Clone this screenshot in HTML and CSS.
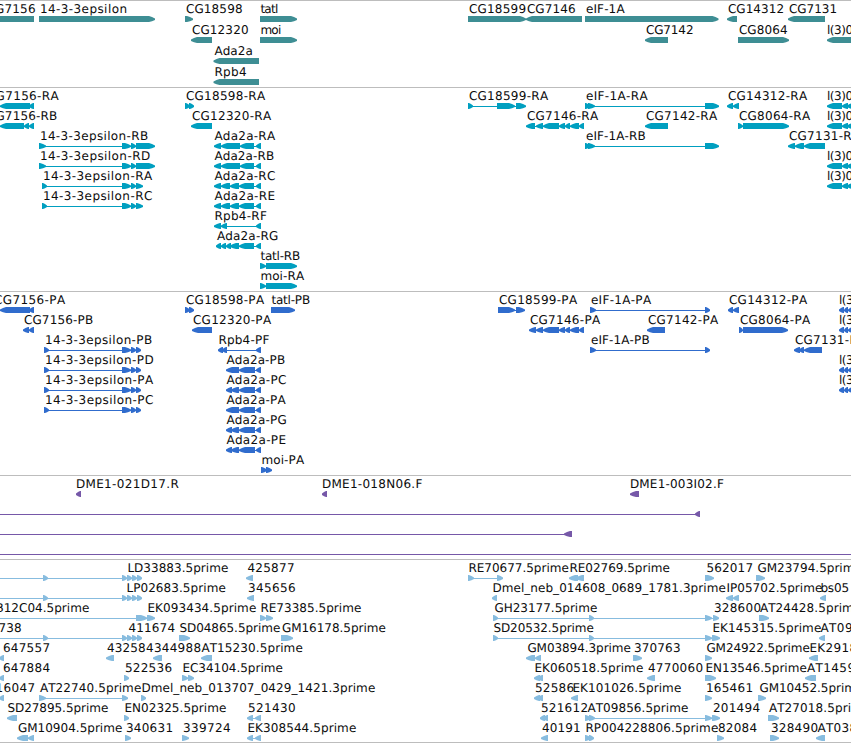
FILE: index.html
```html
<!DOCTYPE html>
<html lang="en">
<head>
<meta charset="utf-8">
<title>Genome browser</title>
<link rel="stylesheet" href="styles.css">
</head>
<body>
<main class="browser" id="browser"></main>
<script src="tracks.js"></script>
</body>
</html>
```
FILE: styles.css
```css
body {
  margin: 0;
  background: #fff;
  overflow: hidden;
}

.browser {
  display: flex;
  flex-direction: column;
  width: 851px;
  border-bottom: 1px solid #bdbdbd;
}

.track {
  box-sizing: border-box;
  border-top: 1px solid #bdbdbd;
  overflow: hidden;
}

.track svg {
  display: block;
}

.track text {
  font: 12px "DejaVu Sans", sans-serif;
  font-kerning: none;
  text-rendering: geometricPrecision;
  fill: #0c0c0c;
}

.genes { height: 87px; color: #3e8e94; }
.transcripts { height: 204px; color: #009fc0; }
.proteins { height: 184px; color: #306ccd; }
.clones { height: 84px; color: #7658a8; }
.ests { height: 183px; color: #87bcdf; }
```
FILE: tracks.js
```javascript
// Each feature: "label | left | right | strand | exon ranges".
// left/right bound the label's ink; exon ranges are x0:x1 pairs.
const L3 = 'l(3)05822|827.5|881|<|827:842 842:848 847:853';
const L3P = 'l(3)05822|839.5|893|<|839:844 844:848 848:853';
const E5 = '122:127 127:132 132:137 137:142';
const tracks = [
  { name: 'genes', height: 86, pitch: 21, rows: [
    ['CG7156|-14|34.5|<|-20:34', '14-3-3epsilon|40.5|126|>|39:155', 'CG18598|185.5|241.5|>|185:193',
     'tatl|260|277.5|>|260:297', 'CG18599|468.5|525|>|468:526', 'CG7146|526.5|574.5|<|526:582',
     'eIF-1A|585.5|625|>|585:718.5', 'CG14312|727.5|783|<|727:737', 'CG7131|788.5|836|<|788:825'],
    ['CG12320|191.5|247.5|<|191:212', 'moi|261|280.5|>|260:297', 'CG7142|645.5|692.5|<|645:668',
     'CG8064|738.5|786.5|>|738:789', 'l(3)05822|827.5|881|<|827:860'],
    ['Ada2a|214|252|<|213.5:259'],
    ['Rpb4|215|245.5|<|213.5:259']
  ] },
  { name: 'transcripts', height: 203, pitch: 20, rows: [
    ['CG7156-RA|-13.5|59|<|0:30 29:34', 'CG18598-RA|185.5|265.5|>|185:190 189:194',
     'CG18599-RA|468.5|548.5|>|468:473 497:515 516:526', 'eIF-1A-RA|585.5|648|>|585:590 588:595 705:719',
     'CG14312-RA|727.5|807.5|<|727:733 733:739', L3],
    ['CG7156-RB|-13.5|56.5|<|0:24 24:29 29:34', 'CG12320-RA|191.5|271.5|<|191:212',
     'CG7146-RA|526.5|598.5|<|526:535 536:543 543:559 559:565 565:570 570:579 579:584',
     'CG7142-RA|645.5|717.5|<|645:668', 'CG8064-RA|738.5|810.5|>|738:743 743:789', L3],
    ['14-3-3epsilon-RB|40.5|147.5|>|39:46 122:131 131:136 136:155', 'Ada2a-RA|214|275.5|<|214:221 221:240 240:254 256:261',
     'eIF-1A-RB|585.5|645|>|585:590 588:595 705:719', 'CG7131-RA|788.5|860.5|<|788:795 795:804 804:825'],
    ['14-3-3epsilon-RD|40.5|149.5|>|39:46 122:131 131:136 136:155', 'Ada2a-RB|214|273.5|<|214:221 221:240 240:254 256:261', L3],
    ['14-3-3epsilon-RA|43.5|152.5|>|42:47 122:131 131:136 136:143', 'Ada2a-RC|214|274.5|<|214:221 221:230 230:239 239:254 256:261', L3],
    ['14-3-3epsilon-RC|43.5|151.5|>|42:47 122:131 131:136 136:143', 'Ada2a-RE|214|274|<|214:221 221:230 230:239 239:254 256:261'],
    ['Rpb4-RF|215|266.5|<|214:221 221:227 256:261'],
    ['Ada2a-RG|216.5|277.5|<|216:221 221:226 226:231 230:239 239:254 256:261'],
    ['tatl-RB|260|299.5|>|260:266 266:297'],
    ['moi-RA|261|304.5|>|260:266 266:297']
  ] },
  { name: 'proteins', height: 183, pitch: 20, rows: [
    ['CG7156-PA|-6.5|65.5|<|0:30 29:34', 'CG18598-PA|185.5|264.5|>|185:190 189:194', 'tatl-PB|271|309.5|>|271:295',
     'CG18599-PA|498.5|577.5|>|498:515 516:525', 'eIF-1A-PA|590.5|651.5|>|590:596 705:710',
     'CG14312-PA|728.5|807.5|<|728:733 733:739', L3P],
    ['CG7156-PB|23.5|92.5|<|23:29 29:34', 'CG12320-PA|192.5|271.5|<|192:212',
     'CG7146-PA|529.5|600.5|<|529:536 536:543 543:559 559:565 565:570 570:579 579:584',
     'CG7142-PA|647.5|718.5|<|647:665', 'CG8064-PA|739.5|810.5|>|739:743 743:788', L3P],
    ['14-3-3epsilon-PB|45.5|151.5|>|44:49 122:131 131:136 136:141', 'Rpb4-PF|219|269|<|218:223 222:227 256:261',
     'eIF-1A-PB|590.5|649|>|590:596 705:710', 'CG7131-PA|794.5|865.5|<|794:800 799:804 804:822'],
    ['14-3-3epsilon-PD|45.5|153|>|44:49 122:131 131:136 136:141', 'Ada2a-PB|226|284.5|<|226:239 239:255 256:261', L3P],
    ['14-3-3epsilon-PA|45.5|153.5|>|44:49 122:131 131:136 136:141', 'Ada2a-PC|226|285.5|<|226:232 231:239 239:255 256:261', L3P],
    ['14-3-3epsilon-PC|45.5|152.5|>|44:49 122:131 131:136 136:141', 'Ada2a-PA|226|286|<|226:239 239:255 256:261'],
    ['Ada2a-PG|226|286|<|226:232 231:239 239:255 256:261'],
    ['Ada2a-PE|226|285|<|226:232 231:239 239:255 256:261'],
    ['moi-PA|262|304.5|>|261:267 266:272']
  ] },
  { name: 'clones', height: 83, pitch: 20, rows: [
    ['DME1-021D17.R|76.5|178|<|76:81', 'DME1-018N06.F|322.5|422|<|322:327', 'DME1-003I02.F|630.5|723.5|<|630:639'],
    ['|||<|-20:-10 695:700'],
    ['|||<|-20:-10 564:572'],
    ['|||<|-20:-10 860:870']
  ] },
  { name: 'ests', height: 182, pitch: 20, rows: [
    ['LD33883.5prime|128|227.5|>|-20:-10 43:48 ' + E5, '425877|247|293.5|<|246:253',
     'RE70677.5prime|469|568|>|468:474 497:503', 'RE02769.5prime|570|669|<|569:578 576:584',
     '562017|706|752|>|705:714', 'GM23794.5prime|757|861|>|756:765'],
    ['LP02683.5prime|127|225|>|-20:-10 43:48 ' + E5, '345656|247.5|294.5|<|247:254',
     'Dmel_neb_014608_0689_1781.3prime|493|725|<|492:497', 'IP05702.5prime|727|821.5|<|726:733 733:739',
     'bs05|821|848|<|820:826'],
    ['B12C04.5prime|-4|88.5|>|-20:-10 136:147 147:155', 'EK093434.5prime|148|255.5|>|',
     'RE73385.5prime|261|360.5|>|260:266 266:273', 'GH23177.5prime|494|596.5|>|493:498 589:594 705:712 713:719',
     '328600|713.5|760|>|', 'AT24428.5prime|759.5|860.5|>|759:769'],
    ['738|-2|20.5|>|-20:-10 43:48 ' + E5, '411674|128|174|>|', 'SD04865.5prime|179|279.5|>|179:190',
     'GM16178.5prime|281.5|385|>|281:293', 'SD20532.5prime|493|593|>|493:498 589:594 705:712 712:720',
     'EK145315.5prime|713|820.5|>|', 'AT09|820|851.5|<|819:825'],
    ['647557|2.5|49|<|-1:4', '432584|106.5|152.5|<|106:114', '344988|153.5|200|<|153:162',
     'AT15230.5prime|201|302|<|201:212', 'GM03894.3prime|527|630|<|526:535 535:541', '370763|633.5|679.5|>|633:642',
     'GM24922.5prime|706|809|>|705:712', 'EK2918|810|856|<|809:818'],
    ['647884|2.5|49|<|-1:4', '522536|124.5|171|>|124:129', 'EC34104.5prime|183|282|>|182:188 188:194',
     'EK060518.5prime|535|642.5|<|534:540 537:543', '4770060|647.5|702|<|647:655',
     'EN13546.5prime|706|806|>|705:716', 'AT1459|806.5|854|<|805:816'],
    ['16047|-4|34|<|-1:4', 'AT22740.5prime|39.5|140.5|>|39:46 122:128',
     'Dmel_neb_013707_0429_1421.3prime|142|374.5|>|141:146', '52586|534.5|573|<|534:540 537:543',
     'EK101026.5prime|573|680.5|<|571:578', '165461|706.5|752|>|705:712', 'GM10452.5prime|759|862.5|>|758:766'],
    ['SD27895.5prime|7|107.5|<|7:17', 'EN02325.5prime|125|225.5|>|124:129', '521430|247.5|294.5|<|247:253 255:261',
     '521612|540.5|587|<|540:545 543:548', 'AT09856.5prime|587|687.5|>|585:591 589:595 705:712 712:720',
     '201494|712.5|759|>|', 'AT27018.5prime|768.5|869.5|>|768:779'],
    ['GM10904.5prime|17.5|121.5|<|17:28 28:34', '340631|125.5|172|>|125:131', '339724|182.5|229.5|>|182:189',
     'EK308544.5prime|248|355.5|<|247:253 255:261', '40191|541.5|579.5|<|541:548',
     'RP004228806.5prime|586|717.5|>|585:591 589:594', '82084|717.5|756|>|717:724',
     '328490|770.5|817|>|770:779', 'AT038|817|856|<|816:825']
  ] }
];

const NS = 'http://www.w3.org/2000/svg';
const pen = document.createElement('canvas').getContext('2d');
pen.font = '12px "DejaVu Sans", sans-serif';
pen.fontKerning = 'none';
pen.textRendering = 'geometricPrecision';

function add(parent, tag, attrs) {
  const node = document.createElementNS(NS, tag);
  for (const key in attrs) node.setAttribute(key, attrs[key]);
  parent.appendChild(node);
  return node;
}

function arrow(x0, x1, y, strand) {
  const head = Math.min(6, x1 - x0 - 1);
  const flip = strand === '<';
  const tip = flip ? x0 : x1;
  const tail = flip ? x1 : x0;
  const d = flip ? 1 : -1;
  const neck = tip + d * head;
  return [[tail, y], [neck, y], [tip + d * head * 0.5, y + 1], [tip, y + 2.5], [tip, y + 3.9],
          [tip + d * head * 0.5, y + 5.2], [neck, y + 6], [tail, y + 6]].map(p => p.join()).join(' ');
}

for (const track of tracks) {
  const section = document.createElement('section');
  section.className = 'track ' + track.name;
  const svg = add(section, 'svg', { width: 851, height: track.height });
  track.rows.forEach((row, i) => {
    const top = i * track.pitch;
    for (const item of row) {
      const [label, left, right, strand, ranges] = item.split('|');
      const exons = ranges ? ranges.split(' ').map(r => r.split(':').map(Number)) : [];
      if (exons.length > 1) {
        const start = exons[0][0] + 2;
        const end = exons[exons.length - 1][1] - 2;
        add(svg, 'rect', { x: start, y: top + 18, width: end - start, height: 1, fill: 'currentColor' });
      }
      for (const [x0, x1] of exons) {
        add(svg, 'polygon', { points: arrow(x0, x1, top + 15, strand), fill: 'currentColor' });
      }
      if (label) {
        const m = pen.measureText(label);
        const ink = m.actualBoundingBoxLeft + m.actualBoundingBoxRight;
        const gap = (right - left - ink) / (label.length - 1);
        const text = add(svg, 'text', {
          x: Number(left) + m.actualBoundingBoxLeft + 0.4, y: top + 12, 'letter-spacing': gap.toFixed(3)
        });
        text.textContent = label;
      }
    }
  });
  document.getElementById('browser').appendChild(section);
}
```
